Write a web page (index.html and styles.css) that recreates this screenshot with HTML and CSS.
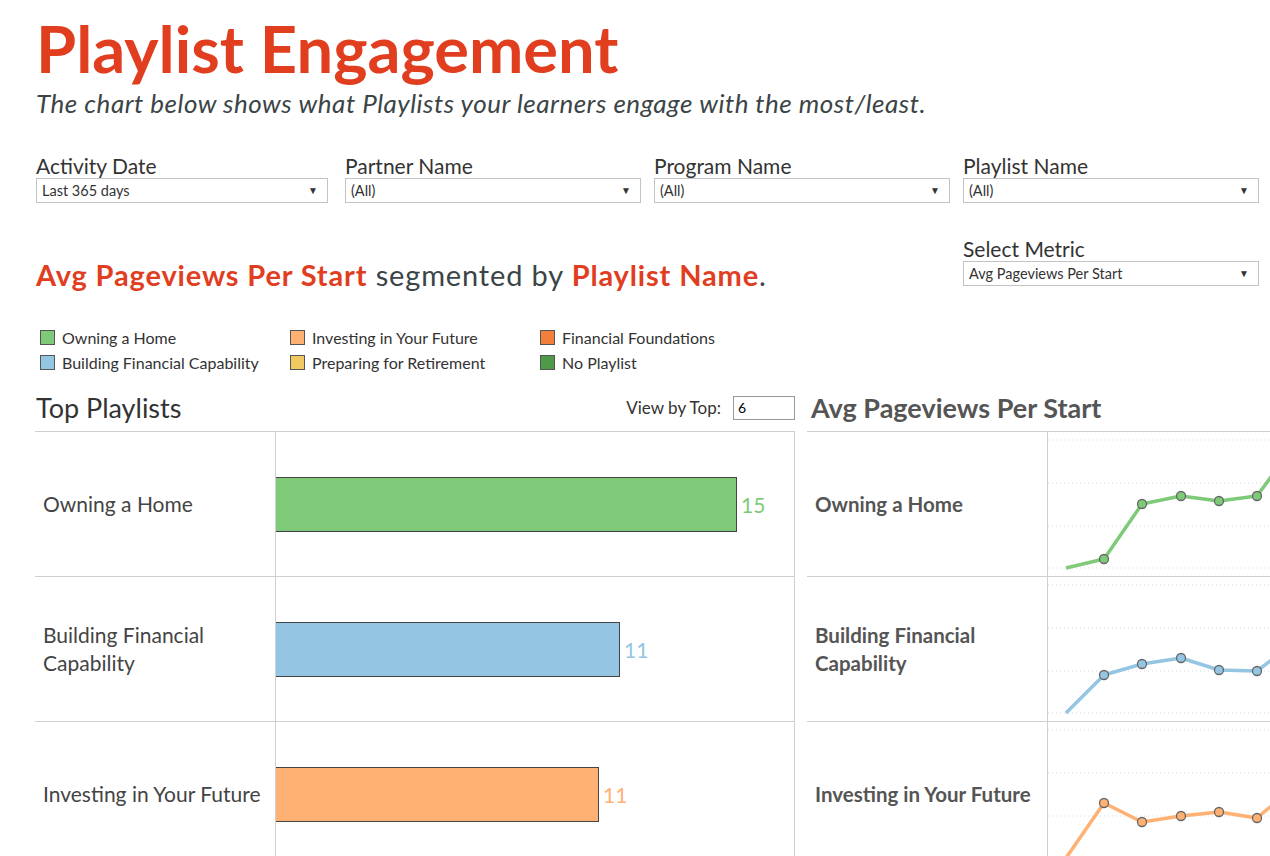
FILE: index.html
```html
<!DOCTYPE html>
<html lang="en">
<head>
<meta charset="UTF-8" />
<title>Playlist Engagement</title>
<link rel="stylesheet" href="styles.css">
</head>
<body>
<div class="page">
  <h1 class="title">Playlist Engagement</h1>
  <p class="subtitle">The chart below shows what Playlists your learners engage with the most/least.</p>

  <!-- Filtres -->
  <div class="filters">
    <div class="filter">
      <label>Activity Date</label>
      <div class="select">Last 365 days<span class="arrow">&#9660;</span></div>
    </div>
    <div class="filter">
      <label>Partner Name</label>
      <div class="select">(All)<span class="arrow">&#9660;</span></div>
    </div>
    <div class="filter">
      <label>Program Name</label>
      <div class="select">(All)<span class="arrow">&#9660;</span></div>
    </div>
    <div class="filter">
      <label>Playlist Name</label>
      <div class="select">(All)<span class="arrow">&#9660;</span></div>
    </div>
  </div>

  <div class="metric-row">
    <h2 class="metric-title"><b>Avg Pageviews Per Start</b> segmented by <b>Playlist Name</b>.</h2>
    <div class="filter">
      <label>Select Metric</label>
      <div class="select">Avg Pageviews Per Start<span class="arrow">&#9660;</span></div>
    </div>
  </div>

  <!-- Legende -->
  <ul class="legend">
    <li><span class="swatch c-home"></span>Owning a Home</li>
    <li><span class="swatch c-invest"></span>Investing in Your Future</li>
    <li><span class="swatch c-found"></span>Financial Foundations</li>
    <li><span class="swatch c-build"></span>Building Financial Capability</li>
    <li><span class="swatch c-retire"></span>Preparing for Retirement</li>
    <li><span class="swatch c-none"></span>No Playlist</li>
  </ul>

  <div class="charts">
    <section class="top-playlists">
      <div class="panel-head">
        <h3>Top Playlists</h3>
        <div class="view-top">View by Top: <span class="top-input">6</span></div>
      </div>
      <div class="rows">
        <div class="row">
          <div class="row-label">Owning a Home</div>
          <div class="bar-cell">
            <div class="bar c-home" style="width:461px"></div>
            <span class="bar-value t-home">15</span>
          </div>
        </div>
        <div class="row">
          <div class="row-label">Building Financial<br>Capability</div>
          <div class="bar-cell">
            <div class="bar c-build" style="width:344px"></div>
            <span class="bar-value t-build">11</span>
          </div>
        </div>
        <div class="row">
          <div class="row-label">Investing in Your Future</div>
          <div class="bar-cell">
            <div class="bar c-invest" style="width:323px"></div>
            <span class="bar-value t-invest">11</span>
          </div>
        </div>
      </div>
    </section>

    <section class="trend">
      <div class="panel-head">
        <h3 class="trend-title">Avg Pageviews Per Start</h3>
      </div>
      <div class="rows">
        <div class="row">
          <div class="row-label">Owning a Home</div>
          <div class="line-cell">
            <svg width="260" height="144" viewBox="0 0 260 144">
              <g class="grid"><line x1="0" y1="8" x2="260" y2="8"/><line x1="0" y1="51" x2="260" y2="51"/><line x1="0" y1="94" x2="260" y2="94"/><line x1="0" y1="136" x2="260" y2="136"/></g>
              <polyline class="line" stroke="#7fca78" points="18,136 56,127 94,72 133,64 171,69 209,64 247,12"/>
              <g class="dots" fill="#7fca78"><circle cx="56" cy="127" r="4.5"/><circle cx="94" cy="72" r="4.5"/><circle cx="133" cy="64" r="4.5"/><circle cx="171" cy="69" r="4.5"/><circle cx="209" cy="64" r="4.5"/><circle cx="247" cy="12" r="4.5"/></g>
            </svg>
          </div>
        </div>
        <div class="row">
          <div class="row-label">Building Financial<br>Capability</div>
          <div class="line-cell">
            <svg width="260" height="144" viewBox="0 0 260 144">
              <g class="grid"><line x1="0" y1="8" x2="260" y2="8"/><line x1="0" y1="51" x2="260" y2="51"/><line x1="0" y1="94" x2="260" y2="94"/><line x1="0" y1="136" x2="260" y2="136"/></g>
              <polyline class="line" stroke="#94c5e3" points="18,136 56,98 94,87 133,81 171,93 209,94 247,65"/>
              <g class="dots" fill="#94c5e3"><circle cx="56" cy="98" r="4.5"/><circle cx="94" cy="87" r="4.5"/><circle cx="133" cy="81" r="4.5"/><circle cx="171" cy="93" r="4.5"/><circle cx="209" cy="94" r="4.5"/><circle cx="247" cy="65" r="4.5"/></g>
            </svg>
          </div>
        </div>
        <div class="row">
          <div class="row-label">Investing in Your Future</div>
          <div class="line-cell">
            <svg width="260" height="144" viewBox="0 0 260 144">
              <g class="grid"><line x1="0" y1="8" x2="260" y2="8"/><line x1="0" y1="51" x2="260" y2="51"/><line x1="0" y1="94" x2="260" y2="94"/><line x1="0" y1="136" x2="260" y2="136"/></g>
              <polyline class="line" stroke="#ffb173" points="18,136 56,81 94,100 133,94 171,90 209,96 247,64"/>
              <g class="dots" fill="#ffb173"><circle cx="56" cy="81" r="4.5"/><circle cx="94" cy="100" r="4.5"/><circle cx="133" cy="94" r="4.5"/><circle cx="171" cy="90" r="4.5"/><circle cx="209" cy="96" r="4.5"/><circle cx="247" cy="64" r="4.5"/></g>
            </svg>
          </div>
        </div>
      </div>
    </section>
  </div>
</div>
</body>
</html>
```

FILE: styles.css
```css
html, body {
  margin: 0;
  padding: 0;
  background: #fff;
  overflow: hidden;
}
body {
  font-family: Lato, "Open Sans", sans-serif;
  color: #333;
}
.page {
  padding-left: 36px;
  width: 1300px;
}

/* Titre */
.title {
  margin: 0;
  padding-top: 12px;
  font-size: 65px;
  line-height: 72px;
  font-weight: 700;
  color: #e03e1f;
}
.subtitle {
  margin: 4px 0 0;
  font-size: 26px;
  line-height: 30px;
  letter-spacing: 0.5px;
  font-style: italic;
  color: #3b4446;
}

/* Filtres */
.filters {
  display: grid;
  grid-template-columns: repeat(4, 309px);
  margin-top: 35px;
}
.filters .filter {
  width: 296px;
}
.filters .filter:first-child {
  width: 292px;
}
.filter label {
  display: block;
  font-size: 21px;
  line-height: 25px;
  color: #333;
}
.select {
  position: relative;
  height: 23px;
  border: 1px solid #c3c3c3;
  font-size: 14.5px;
  line-height: 23px;
  padding-left: 5px;
  color: #333;
}
.select .arrow {
  position: absolute;
  right: 9px;
  top: 0;
  font-size: 10px;
}

.metric-row {
  display: flex;
  justify-content: space-between;
  align-items: flex-end;
  width: 1223px;
  margin-top: 33px;
}
.metric-row .filter {
  width: 296px;
}
.metric-title {
  margin: 0 0 -5px;
  font-size: 29px;
  line-height: 32px;
  letter-spacing: 0.85px;
  font-weight: 400;
  color: #3b4446;
}
.metric-title b {
  font-weight: 700;
  color: #e03e1f;
}

/* Legende */
.legend {
  list-style: none;
  margin: 43px 0 0 4px;
  padding: 0;
  display: grid;
  grid-template-columns: repeat(3, 250px);
  row-gap: 8px;
}
.legend li {
  display: flex;
  align-items: center;
  gap: 7px;
  font-size: 16px;
  line-height: 17px;
  color: #333;
}
.swatch {
  display: inline-block;
  width: 15px;
  height: 15px;
  border: 1px solid #555;
  box-sizing: border-box;
}
.c-home { background: #7fca78; }
.c-build { background: #94c5e3; }
.c-invest { background: #ffb173; }
.c-found { background: #f2803a; }
.c-retire { background: #f0c862; }
.c-none { background: #4f9a48; }
.t-home { color: #7fca78; }
.t-build { color: #94c5e3; }
.t-invest { color: #ffb173; }

/* Graphiques */
.charts {
  display: flex;
  gap: 12px;
  margin-top: 13px;
  margin-left: -1px;
}
.panel-head {
  display: flex;
  justify-content: space-between;
  align-items: center;
  height: 47px;
  padding-left: 1px;
}
.panel-head h3 {
  margin: 0;
  font-size: 27px;
  font-weight: 400;
  color: #333;
}
.trend-title {
  font-weight: 700 !important;
  color: #555 !important;
  padding-left: 3px;
}
.view-top {
  font-size: 17px;
  color: #333;
  display: flex;
  align-items: center;
  gap: 12px;
}
.top-input {
  display: inline-block;
  width: 56px;
  height: 22px;
  border: 1px solid #999;
  font-size: 14px;
  line-height: 22px;
  padding-left: 4px;
  color: #000;
}
.top-playlists {
  width: 760px;
}
.trend {
  width: 520px;
}
.rows {
  border-top: 1px solid #cfcfcf;
}
.top-playlists .rows {
  border-right: 1px solid #cfcfcf;
}
.row {
  display: flex;
  height: 144px;
  border-bottom: 1px solid #cfcfcf;
}
.row-label {
  width: 232px;
  padding-left: 8px;
  border-right: 1px solid #cfcfcf;
  display: flex;
  align-items: center;
  font-size: 21px;
  line-height: 28px;
  color: #444;
}
.trend .row-label {
  font-size: 20.5px;
  font-weight: 700;
  color: #555;
}
.bar-cell {
  display: flex;
  align-items: center;
}
.bar {
  height: 55px;
  border: 1px solid #444;
  border-left: none;
  box-sizing: border-box;
}
.bar-value {
  margin-left: 4px;
  font-size: 21px;
}
.line-cell svg {
  display: block;
}
.grid line {
  stroke: #d8d8d8;
  stroke-width: 1;
  stroke-dasharray: 1 3;
}
.line {
  fill: none;
  stroke-width: 3.5;
  stroke-linejoin: round;
}
.dots circle {
  stroke: #666;
  stroke-width: 1.3;
}
```
